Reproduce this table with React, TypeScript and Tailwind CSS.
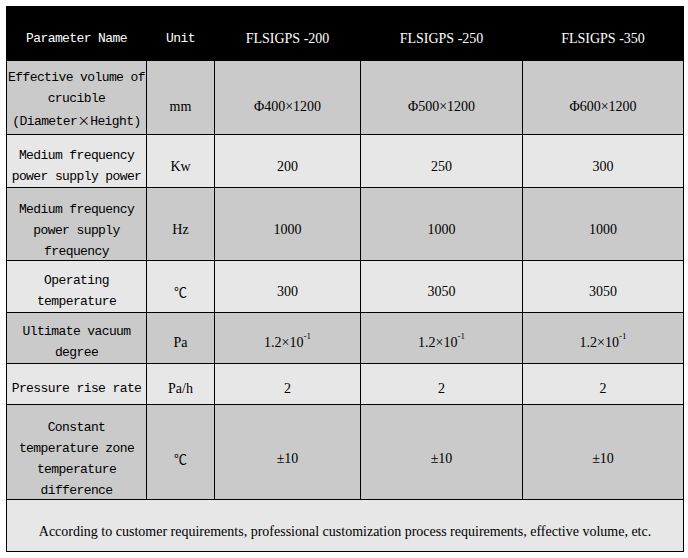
import type { ReactNode } from 'react';

type Row = {
  name: ReactNode;
  unit: ReactNode;
  values: ReactNode[];
  dark: boolean;
  namePad: string;
  valuePad: string;
};

const sup = (
  <>
    1.2×10<sup className="text-[9px] align-[4px]">-1</sup>
  </>
);

const celsius = <span className="font-['Noto_Sans_CJK_SC',serif] text-[13px]">℃</span>;

const rows: Row[] = [
  {
    name: (
      <>
        Effective volume of
        <br />
        crucible
        <br />
        (Diameter<span className="font-['Noto_Sans_CJK_SC',sans-serif] text-[13px] tracking-normal">×</span>Height)
      </>
    ),
    unit: 'mm',
    values: ['Φ400×1200', 'Φ500×1200', 'Φ600×1200'],
    dark: true,
    namePad: 'pt-[4px]',
    valuePad: 'pt-[18px]',
  },
  {
    name: (
      <>
        Medium frequency
        <br />
        power supply power
      </>
    ),
    unit: 'Kw',
    values: ['200', '250', '300'],
    dark: false,
    namePad: 'pt-[10px]',
    valuePad: 'pt-[10px]',
  },
  {
    name: (
      <>
        Medium frequency
        <br />
        power supply
        <br />
        frequency
      </>
    ),
    unit: 'Hz',
    values: ['1000', '1000', '1000'],
    dark: true,
    namePad: 'pt-[12px]',
    valuePad: 'pt-[11px]',
  },
  {
    name: (
      <>
        Operating
        <br />
        temperature
      </>
    ),
    unit: celsius,
    values: ['300', '3050', '3050'],
    dark: false,
    namePad: 'pt-[9px]',
    valuePad: 'pt-[10px]',
  },
  {
    name: (
      <>
        Ultimate vacuum
        <br />
        degree
      </>
    ),
    unit: 'Pa',
    values: [sup, sup, sup],
    dark: true,
    namePad: 'pt-[7px]',
    valuePad: 'pt-[9px]',
  },
  {
    name: 'Pressure rise rate',
    unit: 'Pa/h',
    values: ['2', '2', '2'],
    dark: false,
    namePad: 'pt-[9px]',
    valuePad: 'pt-[9px]',
  },
  {
    name: (
      <>
        Constant
        <br />
        temperature zone
        <br />
        temperature
        <br />
        difference
      </>
    ),
    unit: celsius,
    values: ['±10', '±10', '±10'],
    dark: true,
    namePad: 'pt-[13px]',
    valuePad: 'pt-[13px]',
  },
];

const mono = "font-['Liberation_Mono',monospace] text-[13px] tracking-[-0.6px] leading-[21px] whitespace-nowrap";
const serif = "font-['Liberation_Serif','Noto_Sans_CJK_SC',serif] text-[14px] leading-[21px] whitespace-nowrap";
const cell = 'flex flex-col items-center justify-center text-center';

export default function App() {
  return (
    <div className="min-h-[558px] bg-white pl-[6px] pt-[6px]">
      <div className="grid w-[678px] grid-cols-[139px_67px_145px_161px_160px] grid-rows-[53px_73px_52px_72px_51px_50px_40px_94px_51px] gap-px bg-black p-px text-black">
        <div className={`${cell} ${mono} bg-black pt-[9px] text-white`}>Parameter Name</div>
        <div className={`${cell} ${mono} bg-black pt-[9px] text-white`}>Unit</div>
        <div className={`${cell} ${serif} bg-black pt-[9px] text-white`}>FLSIGPS -200</div>
        <div className={`${cell} ${serif} bg-black pt-[9px] text-white`}>FLSIGPS -250</div>
        <div className={`${cell} ${serif} bg-black pt-[9px] text-white`}>FLSIGPS -350</div>

        {rows.map((row, i) => {
          const bg = row.dark ? 'bg-[#cacaca]' : 'bg-[#e7e7e7]';
          return [
            <div key={`n${i}`} className={`${cell} ${mono} ${bg} ${row.namePad}`}>
              <div>{row.name}</div>
            </div>,
            <div key={`u${i}`} className={`${cell} ${serif} ${bg} ${row.valuePad}`}>
              {row.unit}
            </div>,
            ...row.values.map((v, j) => (
              <div key={`v${i}-${j}`} className={`${cell} ${serif} ${bg} ${row.valuePad}`}>
                <div>{v}</div>
              </div>
            )),
          ];
        })}

        <div className={`${cell} ${serif} col-span-5 bg-[#e7e7e7] pt-[12px]`}>
          According to customer requirements, professional customization process requirements, effective volume, etc.
        </div>
      </div>
    </div>
  );
}
